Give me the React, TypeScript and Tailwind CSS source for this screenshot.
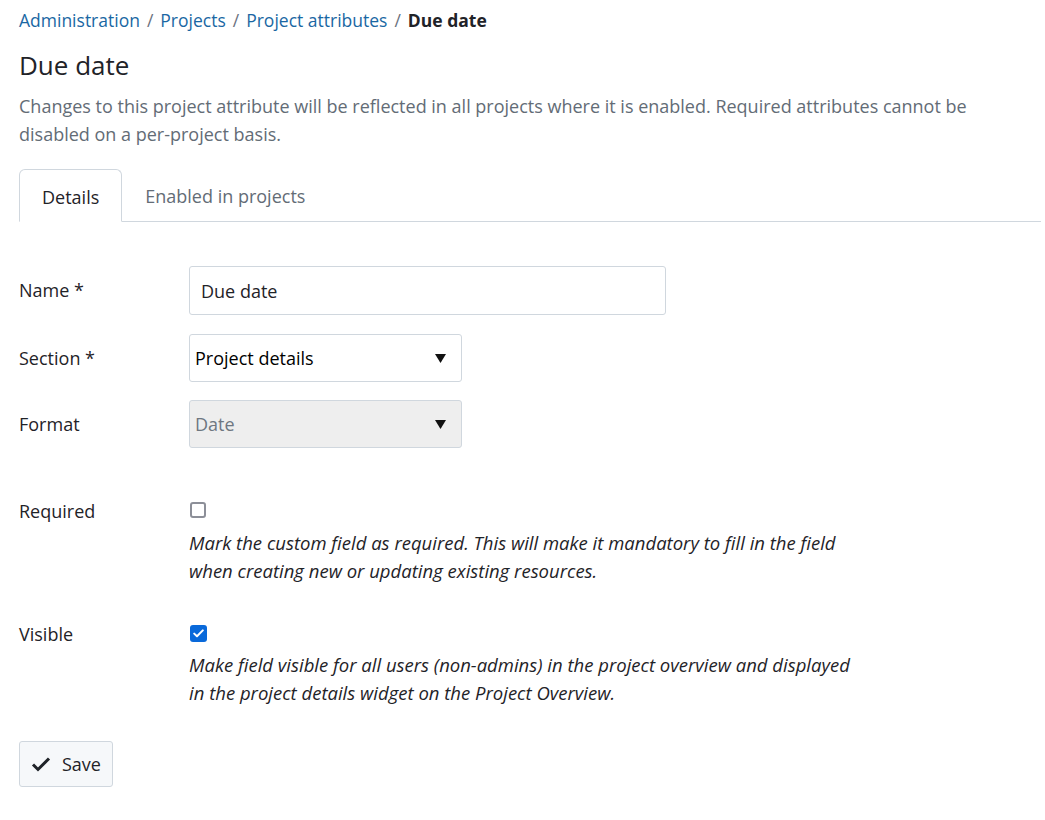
import { useState } from 'react'

const font = { fontFamily: '"Open Sans", "Noto Sans", sans-serif' }

function Caret() {
  return (
    <svg width="11" height="9" viewBox="0 0 11 9" className="shrink-0">
      <path d="M0 0 H11 L5.5 9 Z" fill="#111" />
    </svg>
  )
}

export default function App() {
  const [visible, setVisible] = useState(true)
  const [required, setRequired] = useState(false)

  return (
    <div className="bg-white text-[#1f2328] min-h-screen pl-[19px] pt-[7px] text-[18px]" style={font}>
      {/* Breadcrumb */}
      <nav className="flex items-center h-[26px] text-[17.5px]">
        <a className="text-[#1a67a3]">Administration</a>
        <span className="mx-[7px] text-[#6b7280]">/</span>
        <a className="text-[#1a67a3]">Projects</a>
        <span className="mx-[7px] text-[#6b7280]">/</span>
        <a className="text-[#1a67a3]">Project attributes</a>
        <span className="mx-[7px] text-[#6b7280]">/</span>
        <span className="font-bold">Due date</span>
      </nav>

      <h1 className="mt-[14px] text-[26px] leading-[36px] font-normal">Due date</h1>
      <p className="mt-[9px] text-[18px] leading-[28px] text-[#636c76] pr-[60px]">
        Changes to this project attribute will be reflected in all projects where it is enabled. Required attributes cannot be disabled on a per-project basis.
      </p>

      {/* Tabs */}
      <div className="mt-[21px] flex items-end border-b border-[#d0d7de] mr-[4px]">
        <div className="h-[53px] px-[22px] pt-[3px] flex items-center border border-[#d0d7de] border-b-white -mb-px rounded-t-[6px] bg-white">
          Details
        </div>
        <div className="h-[52px] px-[23px] pt-[3px] flex items-center text-[#636c76]">Enabled in projects</div>
      </div>

      {/* Form */}
      <div className="mt-[44px] flex flex-col">
        <div className="flex items-center">
          <label className="w-[170px]">Name *</label>
          <input
            defaultValue="Due date"
            className="w-[477px] h-[49px] border border-[#d0d7de] rounded-[3px] px-[11px] text-[#1f2328] outline-none"
          />
        </div>
        <div className="flex items-center mt-[19px]">
          <label className="w-[170px]">Section *</label>
          <div className="w-[273px] h-[48px] border border-[#d0d7de] rounded-[3px] pl-[5px] pr-[15px] flex items-center justify-between text-black">
            <span>Project details</span>
            <Caret />
          </div>
        </div>
        <div className="flex items-center mt-[18px]">
          <label className="w-[170px]">Format</label>
          <div className="w-[273px] h-[48px] border border-[#d0d7de] rounded-[3px] pl-[5px] pr-[15px] flex items-center justify-between bg-[#eeeeee] text-[#6e7781]">
            <span>Date</span>
            <Caret />
          </div>
        </div>

        <div className="flex mt-[51px]">
          <label className="w-[170px] leading-[24px]">Required</label>
          <div className="flex flex-col">
            <button
              onClick={() => setRequired(!required)}
              className="mt-[3px] ml-[1px] w-[16px] h-[16px] rounded-[3px] border-2 border-[#8c8f98] bg-white"
            />
            <p className="italic text-[18.5px] mt-[11px] leading-[28px] w-[672px]">
              Mark the custom field as required. This will make it mandatory to fill in the field when creating new or updating existing resources.
            </p>
          </div>
        </div>

        <div className="flex mt-[37px]">
          <label className="w-[170px] leading-[24px]">Visible</label>
          <div className="flex flex-col">
            <button
              onClick={() => setVisible(!visible)}
              className="mt-[3px] ml-[1px] w-[17px] h-[17px] rounded-[3px] bg-[#0969da] flex items-center justify-center"
            >
              {visible && (
                <svg width="11" height="9" viewBox="0 0 11 9">
                  <path d="M1.2 4.6 L4 7.3 L9.8 1.4" fill="none" stroke="white" strokeWidth="2" strokeLinecap="round" strokeLinejoin="round" />
                </svg>
              )}
            </button>
            <p className="italic text-[18.5px] mt-[9px] leading-[28px] w-[672px]">
              Make field visible for all users (non-admins) in the project overview and displayed in the project details widget on the Project Overview.
            </p>
          </div>
        </div>

        <div className="mt-[34px]">
          <button className="h-[46px] px-[11px] flex items-center gap-[11px] bg-[#f6f8fa] border border-[#d0d7de] rounded-[3px]">
            <svg width="20" height="16" viewBox="0 0 20 16">
              <path d="M2 8.5 L7 13.5 L18 2.5" fill="none" stroke="#1f2328" strokeWidth="3" />
            </svg>
            <span>Save</span>
          </button>
        </div>
      </div>
    </div>
  )
}
